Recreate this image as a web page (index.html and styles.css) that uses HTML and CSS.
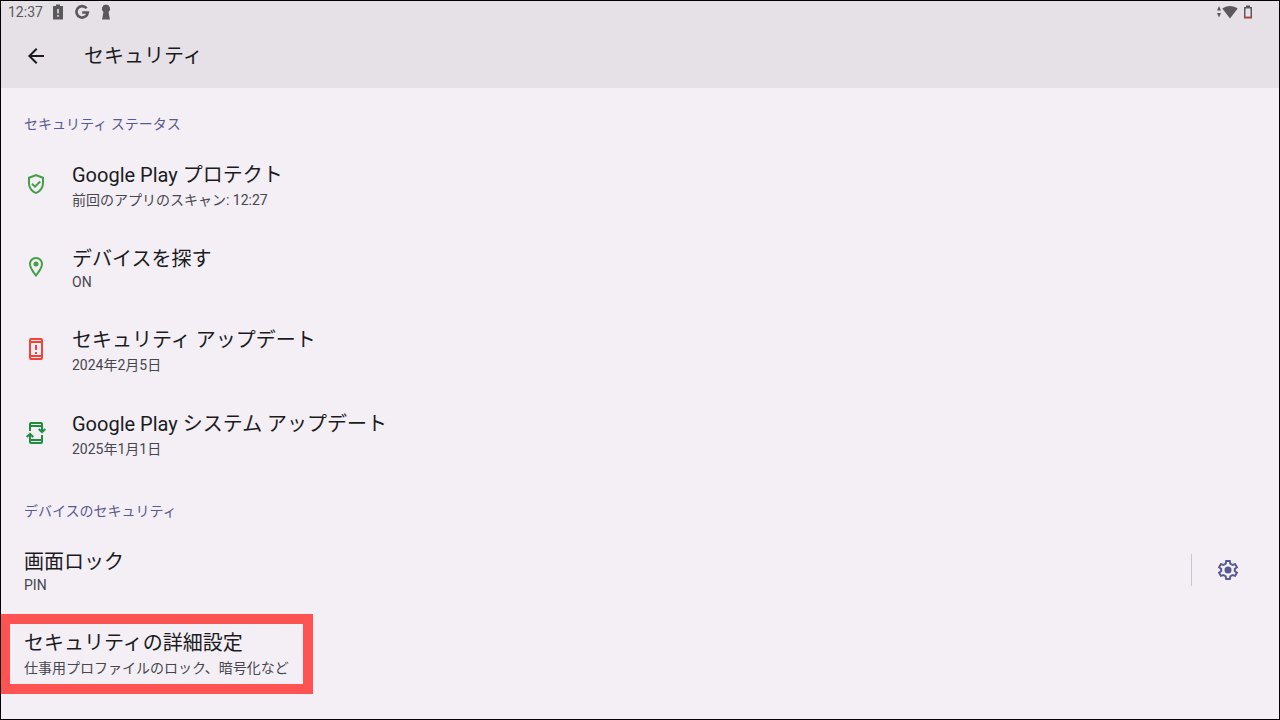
FILE: index.html
```html
<!DOCTYPE html>
<html lang="ja">
<head>
    <meta charset="UTF-8">
    <meta name="viewport" content="width=device-width, initial-scale=1.0">
    <title>セキュリティ</title>
    <link rel="stylesheet" href="styles.css">
</head>
<body>
    <header>
        <!-- ステータスバー -->
        <div class="statusbar">
            <span class="clock">12:37</span>
            <svg class="s-icon" viewBox="0 0 16 16"><path fill-rule="evenodd" d="M6 .500h4V2h3v13.500H3V2h3zM7.200 5v4.500h1.600V5zM7.200 11v1.700h1.600V11z"/></svg>
            <svg class="s-icon" viewBox="0 0 16 16"><path class="g-line" d="M12.600 4.300A5.700 5.700 0 1 0 13.800 8.500H8.200"/></svg>
            <svg class="s-icon" viewBox="0 0 16 16"><path d="M8 .500a4.300 4.300 0 0 1 2.600 7.600L11.900 15.500H4.100L5.400 8.100A4.300 4.300 0 0 1 8 .500z"/></svg>
            <div class="status-right">
                <svg width="6" height="12" viewBox="0 0 6 12"><path d="M3 0l2 4.500H1zM3 11.500L1 7h4z"/></svg>
                <svg width="16" height="14" viewBox="0 0 16 14"><path d="M8 13.500L.300 3.600C4.500 0 11.500 0 15.700 3.600z"/></svg>
                <svg class="battery" width="10" height="14" viewBox="0 0 10 14"><path fill-rule="evenodd" d="M3 .500h4V2h2v11.500H1V2h2zM2.500 3.500V12h5V3.500z"/><path class="low" d="M2 11.500h6v1.500H2z"/></svg>
            </div>
        </div>

        <!-- ツールバー -->
        <div class="toolbar">
            <button class="icon-btn" aria-label="戻る">
                <svg class="icon" viewBox="0 0 24 24"><path d="M20 11H7.830l5.590-5.590L12 4l-8 8 8 8 1.410-1.410L7.830 13H20v-2z"/></svg>
            </button>
            <h1>セキュリティ</h1>
        </div>
    </header>

    <main>
        <h2>セキュリティ ステータス</h2>

        <a class="row" href="#">
            <svg class="icon green" viewBox="0 0 24 24"><path d="M12 2L4 5v6.090c0 5.050 3.410 9.760 8 10.910 4.590-1.150 8-5.860 8-10.910V5l-8-3zm6 9.090c0 4-2.550 7.700-6 8.830-3.450-1.130-6-4.820-6-8.830V6.400l6-2.250 6 2.250v4.690z"/><path class="check" d="M8 11.700l3 3 5.200-5.200"/></svg>
            <span class="text">
                <span class="title">Google Play プロテクト</span>
                <span class="summary">前回のアプリのスキャン: 12:27</span>
            </span>
        </a>

        <a class="row" href="#">
            <svg class="icon green" viewBox="0 0 24 24"><path fill-rule="evenodd" d="M12 2C8.130 2 5 5.130 5 9c0 5.250 7 13 7 13s7-7.750 7-13c0-3.870-3.130-7-7-7zM7 9c0-2.760 2.240-5 5-5s5 2.240 5 5c0 2.880-2.880 7.190-5 9.880C9.920 16.210 7 11.850 7 9z"/><circle cx="12" cy="9" r="2.500"/></svg>
            <span class="text">
                <span class="title">デバイスを探す</span>
                <span class="summary latin">ON</span>
            </span>
        </a>

        <a class="row" href="#">
            <svg class="icon red" viewBox="0 0 24 24"><path fill-rule="evenodd" d="M7 1h10a2 2 0 0 1 2 2v18a2 2 0 0 1-2 2H7a2 2 0 0 1-2-2V3a2 2 0 0 1 2-2zM7 3v1h10V3zM7 6v12h10V6zM7 20v1h10v-1z"/><path d="M11 8h2v5h-2zM11 15h2v2h-2z"/></svg>
            <span class="text">
                <span class="title">セキュリティ アップデート</span>
                <span class="summary">2024年2月5日</span>
            </span>
        </a>

        <a class="row" href="#">
            <svg class="icon dark-green" viewBox="0 0 24 24"><path fill-rule="evenodd" d="M5 10V3a2 2 0 0 1 2-2h10a2 2 0 0 1 2 2v3h-2H7v4zM7 3v1h10V3zM19 14v7a2 2 0 0 1-2 2H7a2 2 0 0 1-2-2v-3h12v-4zM7 20v1h10v-1z"/><path class="arrow" d="M18 4v6M14.700 8L18 11.200 21.300 8M6 20v-6M2.700 16L6 12.800 9.300 16"/></svg>
            <span class="text">
                <span class="title">Google Play システム アップデート</span>
                <span class="summary">2025年1月1日</span>
            </span>
        </a>

        <h2>デバイスのセキュリティ</h2>

        <div class="row">
            <a class="text" href="#">
                <span class="title">画面ロック</span>
                <span class="summary latin">PIN</span>
            </a>
            <div class="side">
                <button class="icon-btn" aria-label="画面ロックの設定">
                    <svg class="icon gear" viewBox="0 0 24 24"><path d="M10.200 3h3.600l.500 2.700 2.200 1.300 2.600-.900 1.800 3.100-2.100 1.700v2.200l2.100 1.700-1.800 3.100-2.600-.900-2.200 1.300-.500 2.700h-3.600l-.500-2.700-2.200-1.300-2.600.900-1.800-3.100 2.100-1.700v-2.200L3.100 9.200l1.800-3.100 2.600.900 2.200-1.300z"/><circle cx="12" cy="12" r="3.500"/></svg>
                </button>
            </div>
        </div>

        <!-- 強調枠つきの項目 -->
        <a class="row marked" href="#">
            <span class="text">
                <span class="title">セキュリティの詳細設定</span>
                <span class="summary">仕事用プロファイルのロック、暗号化など</span>
            </span>
        </a>
    </main>
</body>
</html>
```

FILE: styles.css
```css
/* 基本スタイル */
*, *::after {
    box-sizing: border-box;
}

body {
    margin: 0;
    min-height: 100vh;
    border: 1px solid #000;
    background: #f4eff5;
    color: #1b1b1f;
    font-family: Roboto, "Noto Sans CJK JP", sans-serif;
}

h1, h2 {
    margin: 0;
    font-weight: 400;
}

svg {
    display: block;
    fill: currentColor;
}

/* ヘッダー */
header {
    background: #e6e1e6;
}

.statusbar {
    display: flex;
    align-items: center;
    gap: 8px;
    height: 23px;
    padding: 0 26px 1px 7px;
    color: #5b585c;
}

.clock {
    flex: none;
    width: 34px;
    font-size: 14px;
    line-height: 20px;
}

.s-icon {
    width: 16px;
    height: 16px;
}

.g-line {
    fill: none;
    stroke: currentColor;
    stroke-width: 2.6;
}

.status-right {
    display: flex;
    align-items: center;
    margin-left: auto;
}

.battery {
    margin-left: 5px;
}

.low {
    fill: #d2442c;
}

.toolbar {
    display: flex;
    align-items: center;
    gap: 36px;
    height: 64px;
    padding: 0 23px;
}

.toolbar h1 {
    font-size: 20px;
    line-height: 28px;
}

.icon-btn {
    display: block;
    padding: 0;
    border: none;
    background: none;
    color: inherit;
    cursor: pointer;
}

.icon {
    flex: none;
    width: 24px;
    height: 24px;
}

/* 設定リスト */
h2 {
    padding: 24px 23px 6px;
    color: #575992;
    font-size: 14px;
    line-height: 24px;
}

.row {
    position: relative;
    display: flex;
    align-items: center;
    gap: 24px;
    padding: 0 23px;
    color: inherit;
    text-decoration: none;
}

.text {
    flex: 1;
    padding: 19px 0 15px;
    color: inherit;
    text-decoration: none;
}

.title, .summary {
    display: block;
}

.title {
    font-size: 20px;
    line-height: 28px;
}

.summary {
    color: #46464f;
    font-size: 14px;
    line-height: 22px;
}

.summary.latin {
    line-height: 19px;
}

.side {
    padding: 4px 16px 4px 24px;
    border-left: 1px solid #c7c5d0;
    color: #575992;
}

/* アイコンの色 */
.green {
    color: #43a047;
}

.red {
    color: #f44336;
}

.dark-green {
    color: #1e8e3e;
}

.check, .arrow, .gear path {
    fill: none;
    stroke: currentColor;
    stroke-width: 2;
}

/* 赤い強調枠 */
.marked::after {
    content: "";
    position: absolute;
    top: 4px;
    bottom: 0;
    left: -1px;
    width: 313px;
    border: 10px solid #ff5252;
}
```
